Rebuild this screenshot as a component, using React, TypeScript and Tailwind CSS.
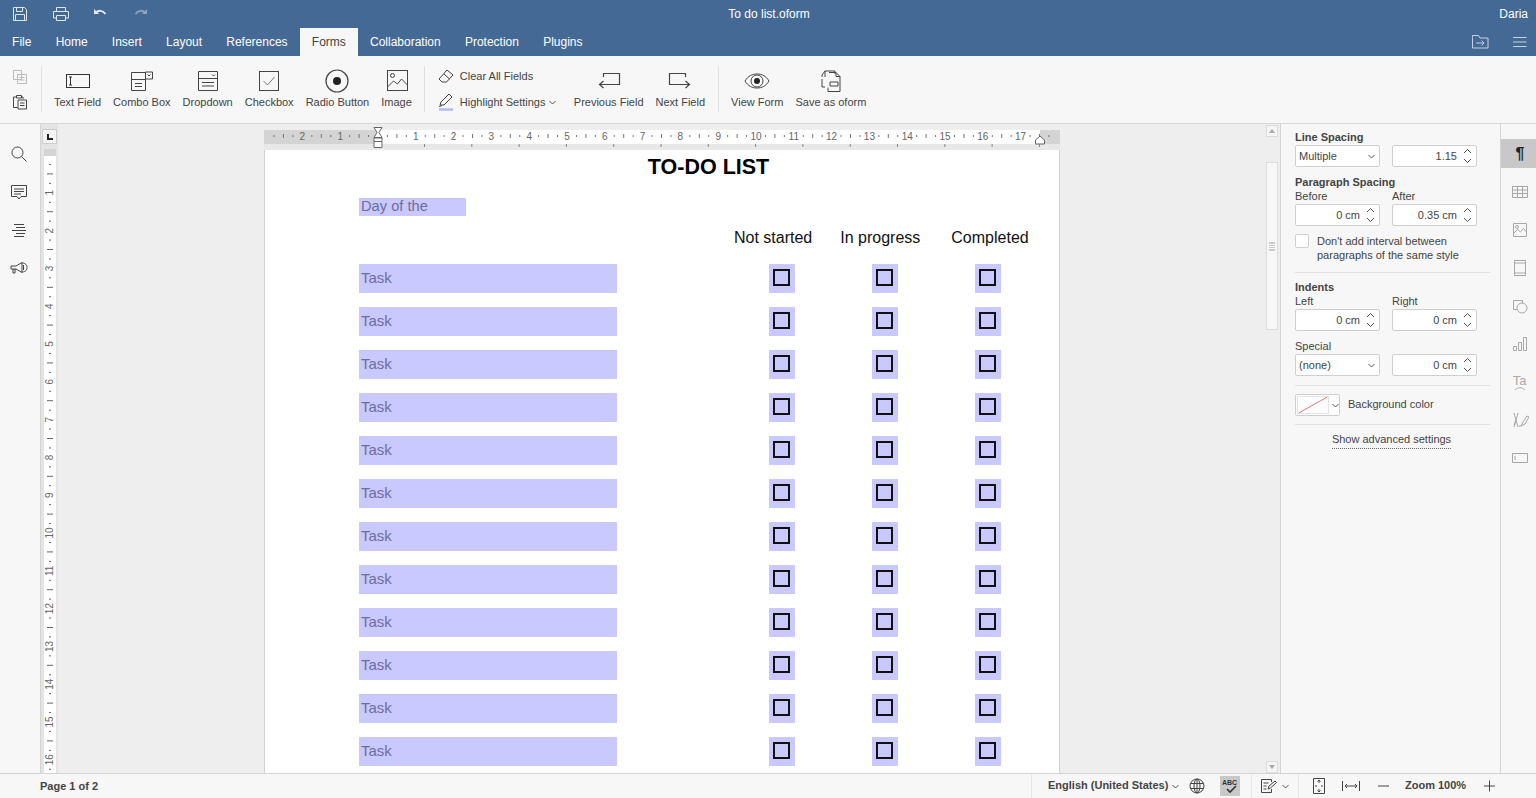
import React from 'react'

const tabs = ['File', 'Home', 'Insert', 'Layout', 'References', 'Forms', 'Collaboration', 'Protection', 'Plugins']
const rows = Array.from({ length: 12 }, (_, i) => i)
const hTicks = Array.from({ length: 83 }, (_, i) => i - 11)
const vTicks = Array.from({ length: 66 }, (_, i) => i)

function Ico({ w = 28, h = 24, children, className = 'text-[#444]' }: { w?: number; h?: number; children: React.ReactNode; className?: string }) {
  return (
    <svg width={w} height={h} viewBox={`0 0 ${w} ${h}`} fill="none" stroke="currentColor" strokeWidth="1" className={`block shrink-0 ${className}`}>
      {children}
    </svg>
  )
}

function ToolItem({ label, icon }: { label: string; icon: React.ReactNode }) {
  return (
    <div className="flex flex-col items-center">
      <div className="h-6 flex items-center justify-center">{icon}</div>
      <div className="mt-[2px] text-[11px] leading-[14px] text-[#444] whitespace-nowrap">{label}</div>
    </div>
  )
}

function Sep() {
  return <div className="w-px h-[46px] mt-[-3px] bg-[#e0e0e0] shrink-0" />
}

function Spin({ value, w = 'w-[85px]' }: { value: string; w?: string }) {
  return (
    <div className={`${w} h-[22px] bg-white border border-[#cfcfcf] rounded-[2px] flex items-center justify-end pr-[4px] text-[11px] text-[#444]`}>
      <span>{value}</span>
      <svg width="9" height="16" viewBox="0 0 9 16" fill="none" stroke="#555" strokeWidth="1" className="ml-[6px]">
        <path d="M1 5l3.500-3.500L8 5M1 11l3.500 3.500L8 11" />
      </svg>
    </div>
  )
}

function Select({ value }: { value: string }) {
  return (
    <div className="w-[85px] h-[22px] bg-white border border-[#cfcfcf] rounded-[2px] flex items-center justify-between pl-[3px] pr-[4px] text-[11px] text-[#444]">
      <span>{value}</span>
      <Caret />
    </div>
  )
}

function Caret() {
  return (
    <svg width="7" height="5" viewBox="0 0 7 5" fill="none" stroke="#555" strokeWidth="1" className="shrink-0">
      <path d="M.5 1l3 3 3-3" />
    </svg>
  )
}

function HRuler() {
  return (
    <svg width="796" height="26" viewBox="0 0 796 26" className="block font-['Liberation_Sans',sans-serif]">
      <rect x="0" y="6" width="796" height="14" fill="#d4d4d4" />
      <rect x="114" y="6" width="662" height="14" fill="#fff" />
      <rect x="0" y="20" width="796" height="6" fill="#e8e8e8" />
      {hTicks.map((i) => {
        if (i === 0) return null
        const x = 114 + i * 9.45
        if (i % 4 === 0) {
          return (
            <text key={i} x={x} y="16" textAnchor="middle" fontSize="10" fill="#666">
              {Math.abs(i / 4)}
            </text>
          )
        }
        return <rect key={i} x={x - 0.5} y={i % 2 === 0 ? 10 : 11} width="1" height={i % 2 === 0 ? 4 : 2} fill="#777" />
      })}
      {Array.from({ length: 14 }, (_, i) => (
        <rect key={i} x={160 + i * 47.3} y="20" width="1" height="3" fill="#888" />
      ))}
      <path d="M110 3.500h8l-3 5 3 5h-8l3-5z" fill="#fff" stroke="#666" />
      <path d="M110 17.500v-3.500h8v3.500zM110 17.500h8v6h-8z" fill="#fff" stroke="#666" />
      <path d="M771.500 16l4.500-4 4.500 4v4h-9z" fill="#fff" stroke="#666" />
    </svg>
  )
}

function VRuler() {
  return (
    <svg width="12" height="624" viewBox="0 0 12 624" className="block font-['Liberation_Sans',sans-serif]">
      <rect x="0" y="0" width="12" height="624" fill="#fff" />
      <rect x="0" y="0" width="12" height="7" fill="#d4d4d4" />
      {vTicks.map((i) => {
        const y = 6 + i * 9.45
        if (i === 0) return null
        if (i % 4 === 0) {
          return (
            <text key={i} x="6" y={y + 3} textAnchor="middle" fontSize="10" fill="#666" transform={`rotate(-90 6 ${y})`}>
              {i / 4}
            </text>
          )
        }
        return <rect key={i} x={i % 2 === 0 ? 3 : 5} y={y - 0.5} width={i % 2 === 0 ? 6 : 2} height="1" fill="#666" />
      })}
    </svg>
  )
}

function CheckCell({ className }: { className: string }) {
  return (
    <div className={`${className} w-[26px] bg-[#c9c8ff] flex items-center justify-center pr-[2px] pb-[2px]`}>
      <div className="w-[17px] h-[17px] border-2 border-[#111]" />
    </div>
  )
}

function TaskRow() {
  return (
    <div className="flex h-[29px]">
      <div className="w-[258px] bg-[#c9c8ff] pl-[2px] text-[15px] leading-[27px] text-[#6e6e9c]">Task</div>
      <CheckCell className="ml-[152px]" />
      <CheckCell className="ml-[77px]" />
      <CheckCell className="ml-[77px]" />
    </div>
  )
}

export default function App() {
  return (
    <div className="w-[1536px] h-[798px] overflow-hidden flex flex-col bg-[#f7f7f7] font-['Liberation_Sans',Arial,sans-serif]">
      {/* header */}
      <div className="h-[56px] bg-[#446995] text-white shrink-0">
        <div className="h-[28px] flex items-center text-[12px]">
          <div className="flex-1 flex items-center">
            <Ico w={16} h={16} className="text-[#dfe6ef] ml-[12px]">
              <path d="M1.500 1.500h11l2 2v11h-13z M4.500 1.500v4h6v-4 M3.500 14.500v-6h9v6" />
            </Ico>
            <Ico w={18} h={16} className="text-[#dfe6ef] ml-[24px]">
              <path d="M4.500 5V1.500h9V5M4.500 12h-3V5.500h15V12h-3M4.500 9.500h9v5h-9z" />
            </Ico>
            <Ico w={16} h={16} className="text-[#e6ebf2] ml-[22px]">
              <path d="M2 3v5h5z" fill="currentColor" stroke="none" />
              <path d="M3.500 7c3-3 7-3 10 1" strokeWidth="2" />
            </Ico>
            <Ico w={16} h={16} className="text-[#8ba3bf] ml-[25px]">
              <path d="M14 3v5H9z" fill="currentColor" stroke="none" />
              <path d="M12.500 7c-3-3-7-3-10 1" strokeWidth="2" />
            </Ico>
          </div>
          <div className="pl-[10px]">To do list.oform</div>
          <div className="flex-1 text-right pr-[8px]">Daria</div>
        </div>
        <div className="h-[28px] flex text-[12px] leading-[28px]">
          {tabs.map((t) => (
            <div key={t} className={t === 'Forms' ? 'px-[12.1px] bg-[#f7f7f7] text-[#444]' : 'px-[12.1px]'}>
              {t}
            </div>
          ))}
          <div className="flex-1 flex items-center justify-end">
            <Ico w={17} h={14} className="text-[#c5d2e1] mr-[23px]">
              <path d="M.5 2.500v10.500h15.500V3h-8L6.500.5H.5zM4 8h8M9.500 5.500L12 8l-2.500 2.500" />
            </Ico>
            <Ico w={15} h={12} className="text-[#c5d2e1] mr-[9px]">
              <path d="M1 1.500h13.500M1 6h13.500M1 10.500h13.500" />
            </Ico>
          </div>
        </div>
      </div>

      {/* toolbar */}
      <div className="h-[68px] border-b border-[#d8d8d8] shrink-0 flex pt-[13px]">
        <div className="w-[41px] shrink-0 pl-[12px] flex flex-col gap-[9px]">
          <Ico w={16} h={16} className="text-[#bbb]">
            <path d="M1.500 1.500h8v9h-8zM5.500 5.500h9v9h-9zM7.500 8.500h5M7.500 11h5" />
          </Ico>
          <Ico w={16} h={16} className="text-[#444]">
            <path d="M4.500 3H1.500v10.500h4M4.500 1.500h5V4h-5zM9.500 3h1.500v2M6 6h8.500v9H6zM8 9h4.500M8 11.500h4.500" />
          </Ico>
        </div>
        <Sep />
        <div className="flex gap-3 pl-3 pr-[12px]">
          <ToolItem
            label="Text Field"
            icon={
              <Ico w={26} h={24}>
                <rect x="1.500" y="5.500" width="23" height="13" stroke="#333" />
                <path d="M4 8h3M5.500 8v8M4 16h3" stroke="#333" />
              </Ico>
            }
          />
          <ToolItem
            label="Combo Box"
            icon={
              <Ico w={24} h={24}>
                <path d="M1.500 3.500h14v18h-14zM1.500 10.500h14M15.500 3h7v7h-7zM17.500 5.500l1.500 1.500 1.500-1.500M5 14.500h7M5 17.500h7" />
              </Ico>
            }
          />
          <ToolItem
            label="Dropdown"
            icon={
              <Ico w={22} h={24}>
                <path d="M1.500 2.500h19v19h-19zM1.500 9.500h19M15 5.500l1.500 1.500L18 5.500M5 13.500h12M5 17h12" />
              </Ico>
            }
          />
          <ToolItem
            label="Checkbox"
            icon={
              <Ico w={22} h={24}>
                <rect x="1.500" y="2.500" width="19" height="19" />
                <path d="M5.500 12l4 4 7-8" stroke="#777" />
              </Ico>
            }
          />
          <ToolItem
            label="Radio Button"
            icon={
              <Ico w={24} h={24}>
                <circle cx="12" cy="12" r="11" strokeWidth="1.200" />
                <circle cx="12" cy="12" r="4" fill="#222" stroke="none" />
              </Ico>
            }
          />
          <ToolItem
            label="Image"
            icon={
              <Ico w={22} h={24}>
                <rect x="1.500" y="1.500" width="20" height="20" />
                <circle cx="6.500" cy="6.500" r="2" />
                <path d="M1.500 18l6-6 4 3 4-5 6 6" />
              </Ico>
            }
          />
        </div>
        <Sep />
        <div className="pl-[13px] flex flex-col w-[149px] shrink-0">
          <div className="flex items-center h-[16px] mt-[-1px]">
            <Ico w={17} h={16}>
              <path d="M1 11l8-9 6 5-6.500 7H4z M6 6l5.500 5" />
            </Ico>
            <span className="ml-[5px] text-[11px] text-[#444] whitespace-nowrap">Clear All Fields</span>
          </div>
          <div className="flex items-center h-[20px] mt-[8px]">
            <Ico w={17} h={20}>
              <path d="M2 13l1-3 8-8 3 3-8 8zM1 14.500l3-1" />
              <path d="M1 17.500h14" stroke="#b9b7f5" strokeWidth="2.500" />
            </Ico>
            <span className="ml-[5px] text-[11px] text-[#444] whitespace-nowrap">Highlight Settings</span>
            <span className="ml-[4px]">
              <Caret />
            </span>
          </div>
        </div>
        <div className="flex gap-3 pr-[13px]">
          <ToolItem
            label="Previous Field"
            icon={
              <Ico w={24} h={24}>
                <path d="M6.500 8V4.500h16v11H10M3 15.500h11M6.500 12L2.500 15.500 6.500 19" strokeWidth="1.200" />
              </Ico>
            }
          />
          <ToolItem
            label="Next Field"
            icon={
              <Ico w={24} h={24}>
                <path d="M17.500 8V4.500h-16v11H14M10 15.500h11M17.500 12l4 3.500-4 3.500" strokeWidth="1.200" />
              </Ico>
            }
          />
        </div>
        <Sep />
        <div className="flex gap-3 pl-3">
          <ToolItem
            label="View Form"
            icon={
              <Ico w={26} h={24}>
                <path d="M1 12c3-5 7-7 12-7s9 2 12 7c-3 5-7 7-12 7s-9-2-12-7z" />
                <circle cx="13" cy="12" r="6" />
                <circle cx="13" cy="12" r="3" fill="#222" stroke="none" />
              </Ico>
            }
          />
          <ToolItem
            label="Save as oform"
            icon={
              <Ico w={24} h={24}>
                <path d="M6 8V2h10l0 3M3 10v8h3M6 2L3 6v2" />
                <path d="M10 3.500h7l4 4v15H9v-4" />
                <path d="M17 3.500v4h4M11 13h8v4h-8z" />
              </Ico>
            }
          />
        </div>
      </div>

      {/* main */}
      <div className="flex-1 min-h-0 flex">
        <div className="w-[41px] shrink-0 border-r border-[#d4d4d4] flex flex-col items-center pt-[22px] pr-[2px] gap-[22px]">
          <Ico w={16} h={16}>
            <circle cx="6.500" cy="6.500" r="5.500" />
            <path d="M10.500 10.500l5 5" />
          </Ico>
          <Ico w={18} h={16}>
            <path d="M1.500 1.500h15v11H11l-2 2.500-2-2.500H1.500zM4 5h10M4 7.500h10M4 10h7" />
          </Ico>
          <Ico w={16} h={16}>
            <path d="M3 2.500h10M5 5.500h9M1 8.500h14M5 11.500h9M3 14.500h10" />
          </Ico>
          <Ico w={18} h={16}>
            <path d="M1 6h5l6-3.500v10L6 9H1zM3 9v4h2V9M12 3c4 0 5 2.500 5 4.500S16 12 12 12M13.500 5v5" />
          </Ico>
        </div>
        <div className="w-[17px] shrink-0 bg-[#e4e4e4]">
          <div className="mx-[1px] mt-[5px] w-[15px] h-[15px] bg-[#f4f4f4] border border-[#ccc] flex items-center justify-center">
            <div className="w-[6px] h-[6px] border-l-2 border-b-2 border-[#222]" />
          </div>
          <div className="ml-[3px] mt-[5px]">
            <VRuler />
          </div>
        </div>
        <div className="w-[1206px] shrink-0 bg-[#eeeeee] overflow-hidden pl-[206px]">
          <HRuler />
          <div className="w-[796px] h-[640px] bg-white border-x border-[#d0d0d0] pl-[94px]">
            <div className="h-[48px] w-[796px] ml-[-95px] pl-[93px] pt-[5px] text-center text-[21.5px] leading-[24px] font-bold text-black">
              TO-DO LIST
            </div>
            <div className="w-[107px] h-[18px] bg-[#c9c8ff] pl-[2px] text-[14.67px] leading-[17px] text-[#6e6e9c]">Day of the</div>
            <div className="h-[48px] flex items-center text-[16px] text-[#111] pl-[375px] pb-[4px] whitespace-nowrap">
              <span>Not started</span>
              <span className="ml-[28px]">In progress</span>
              <span className="ml-[31px]">Completed</span>
            </div>
            <div className="flex flex-col gap-[14px]">
              {rows.map((r) => (
                <TaskRow key={r} />
              ))}
            </div>
          </div>
        </div>

        {/* scrollbar */}
        <div className="w-[16px] shrink-0 bg-[#eeeeee] flex flex-col items-start pl-[2px] pt-px">
          <div className="w-[12px] h-[12px] bg-[#f4f4f4] border border-[#ddd] flex items-center justify-center">
            <div className="border-x-[3px] border-x-transparent border-b-[4px] border-b-[#aaa]" />
          </div>
          <div className="w-[12px] h-[168px] mt-[25px] bg-[#f7f7f7] border border-[#ddd] flex items-center justify-center">
            <div className="w-[6px] h-[9px] border-y border-[#ccc] bg-[repeating-linear-gradient(#ccc_0_1px,transparent_1px_2px)]" />
          </div>
          <div className="flex-1" />
          <div className="w-[12px] h-[12px] bg-[#f4f4f4] border border-[#ddd] flex items-center justify-center">
            <div className="border-x-[3px] border-x-transparent border-t-[4px] border-t-[#aaa]" />
          </div>
        </div>

        {/* right panel */}
        <div className="w-[221px] shrink-0 border-x border-[#d4d4d4] pl-[14px] pr-[10px] pt-[6px] text-[11px] leading-[14px] text-[#444]">
          <div className="font-bold">Line Spacing</div>
          <div className="flex gap-3 mt-px">
            <Select value="Multiple" />
            <Spin value="1.15" />
          </div>
          <div className="font-bold mt-[8px]">Paragraph Spacing</div>
          <div className="flex gap-3">
            <div className="w-[85px]">Before</div>
            <div>After</div>
          </div>
          <div className="flex gap-3 mt-px">
            <Spin value="0 cm" />
            <Spin value="0.35 cm" />
          </div>
          <div className="flex mt-[8px]">
            <div className="w-[14px] h-[14px] bg-white border border-[#cfcfcf] rounded-[2px] shrink-0" />
            <div className="ml-[8px]">
              Don't add interval between
              <br />
              paragraphs of the same style
            </div>
          </div>
          <div className="h-px bg-[#e2e2e2] mt-[10px] mb-[7px]" />
          <div className="font-bold">Indents</div>
          <div className="flex gap-3">
            <div className="w-[85px]">Left</div>
            <div>Right</div>
          </div>
          <div className="flex gap-3 mt-px">
            <Spin value="0 cm" />
            <Spin value="0 cm" />
          </div>
          <div className="mt-[8px]">Special</div>
          <div className="flex gap-3 mt-px">
            <Select value="(none)" />
            <Spin value="0 cm" />
          </div>
          <div className="h-px bg-[#e2e2e2] mt-[9px] mb-[8px]" />
          <div className="flex items-center">
            <div className="w-[45px] h-[22px] bg-white border border-[#cfcfcf] rounded-[2px] flex items-center">
              <svg width="32" height="18" viewBox="0 0 32 18" className="ml-[1px] shrink-0 border border-[#e4e4e4]">
                <path d="M0 18L32 0" stroke="#f05a6a" strokeWidth="1" />
              </svg>
              <span className="ml-[3px]">
                <Caret />
              </span>
            </div>
            <span className="ml-[8px] pb-[2px]">Background color</span>
          </div>
          <div className="h-px bg-[#e2e2e2] mt-[8px] mb-[7px]" />
          <div className="flex justify-center pr-[2px]">
            <span className="border-b border-dotted border-[#666] pb-[2px]">Show advanced settings</span>
          </div>
        </div>

        {/* right rail */}
        <div className="w-[35px] shrink-0 flex flex-col items-center pt-[15px]">
          <div className="w-full h-[29px] bg-[#c8c8c8] flex items-center justify-center pl-[3px] text-[16px] font-bold text-[#222]">¶</div>
          <div className="flex flex-col items-center gap-[22px] mt-[16px] ml-[2px]">
            <Ico w={16} h={16} className="text-[#a8a8a8]">
              <path d="M.5 2.500h15v11H.5zM.5 6h15M.5 9.500h15M5.500 2.500v11M10.500 2.500v11" />
            </Ico>
            <Ico w={16} h={16} className="text-[#a8a8a8]">
              <path d="M1.500 1.500h13v13h-13zM1.500 11.500l4-4 3 2.500 3-3.500 3 3.500" />
              <circle cx="5" cy="5" r="1.500" />
            </Ico>
            <Ico w={14} h={16} className="text-[#a8a8a8]">
              <path d="M1.500 .5h11v15h-11zM1.500 3h11M1.500 13h11" />
            </Ico>
            <Ico w={16} h={16} className="text-[#a8a8a8]">
              <path d="M1.500 2.500h9v9h-9z" />
              <circle cx="10" cy="10" r="5" fill="#f7f7f7" />
            </Ico>
            <Ico w={16} h={16} className="text-[#a8a8a8]">
              <path d="M1.500 10.500h3v4h-3zM6.500 6.500h3v8h-3zM11.500 1.500h3v13h-3z" />
            </Ico>
            <div className="h-4 w-4 flex flex-col items-center text-[13px] leading-[13px] text-[#aaa]">
              <span>Ta</span>
              <svg width="12" height="3" viewBox="0 0 12 3" fill="none" stroke="#aaa"><path d="M1 3c3-3 7-3 10 0" /></svg>
            </div>
            <Ico w={18} h={16} className="text-[#a8a8a8]">
              <path d="M3 1l4 14M7 1L3 15M3 13l2-5M10 14l2-4 4-6 2 1-4 7zM10 14h-2" />
            </Ico>
            <Ico w={16} h={16} className="text-[#a8a8a8]">
              <path d="M.5 3.500h15v9H.5zM3 6v4" />
            </Ico>
          </div>
        </div>
      </div>

      {/* status bar */}
      <div className="h-[25px] shrink-0 border-t border-[#d4d4d4] flex items-center text-[11px] font-bold text-[#444]">
        <div className="pl-[40px] w-[1031px] shrink-0">Page 1 of 2</div>
        <div className="w-px h-full bg-[#e6e6e6]" />
        <div className="ml-[16px] w-[120px] whitespace-nowrap pb-[2px]">English (United States)</div>
        <span className="ml-[4px]">
          <Caret />
        </span>
        <Ico w={16} h={16} className="ml-[10px] text-[#444]">
          <circle cx="8" cy="8" r="7" />
          <ellipse cx="8" cy="8" rx="3" ry="7" />
          <path d="M8 1v14M1.500 5.500h13M1.500 10.500h13" />
        </Ico>
        <div className="ml-[15px] w-[20px] h-[20px] bg-[#c8c8c8] flex items-center justify-center">
          <svg width="16" height="16" viewBox="0 0 16 16" fill="none" stroke="#333">
            <text x="0" y="7" fontSize="7" fill="#333" stroke="none" className="font-['Liberation_Sans',sans-serif]">ABC</text>
            <path d="M5 11l3 3 6-6" strokeWidth="1.600" />
          </svg>
        </div>
        <div className="ml-[11px] w-px h-full bg-[#e6e6e6]" />
        <Ico w={17} h={16} className="ml-[8px] text-[#444]">
          <path d="M11.500 4V1.500h-10v13h10V11M3.500 5h5M3.500 8h3M3.500 11h3M8 11l1-3 6-5 1.500 1.500-6 5.500z" />
        </Ico>
        <span className="ml-[5px]">
          <Caret />
        </span>
        <div className="ml-[9px] w-px h-full bg-[#e6e6e6]" />
        <Ico w={12} h={16} className="ml-[14px] text-[#444]">
          <path d="M.5 .5h11v15H.5zM6 2v3M4.500 3.500L6 2l1.500 1.500M6 14v-3M4.500 12.500L6 14l1.500-1.500M2 8h2M10 8H8" />
        </Ico>
        <Ico w={18} h={12} className="ml-[17px] text-[#444]">
          <path d="M.5 1v10M17.500 1v10M3 6h12M5 4L3 6l2 2M13 4l2 2-2 2" />
        </Ico>
        <Ico w={12} h={12} className="ml-[18px] text-[#444]">
          <path d="M0 6h11" />
        </Ico>
        <span className="ml-[15px] whitespace-nowrap pb-[2px]">Zoom 100%</span>
        <Ico w={12} h={12} className="ml-[18px] text-[#444]">
          <path d="M0 6h11M5.500 .5v11" />
        </Ico>
      </div>
    </div>
  )
}
